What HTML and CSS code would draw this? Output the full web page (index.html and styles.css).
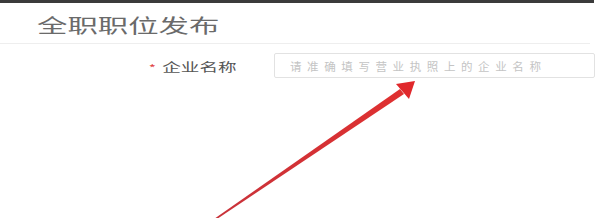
FILE: index.html
```html
<!DOCTYPE html>
<html lang="zh-CN">
<head>
    <meta charset="UTF-8">
    <title>全职职位发布</title>
    <link rel="stylesheet" href="styles.css">
</head>
<body>
    <div class="topbar"></div>
    <div class="page">
        <div class="page-title"><h1>全职职位发布</h1></div>
        <div class="form">
            <div class="form-row">
                <div class="form-label"><label><span class="required">*</span>企业名称</label></div>
                <input class="form-input" type="text" placeholder="请准确填写营业执照上的企业名称">
            </div>
        </div>
        <svg class="arrow" width="600" height="218" viewBox="0 0 600 218">
            <defs>
                <linearGradient id="shaft" x1="0" y1="1" x2="1" y2="0">
                    <stop offset="0" stop-color="#c8323a"/>
                    <stop offset="1" stop-color="#e03030"/>
                </linearGradient>
            </defs>
            <polygon points="214,219 217,219 404,94 400,89" fill="url(#shaft)"/>
            <polygon points="415,81 396,84 409,99" fill="#e0282c"/>
        </svg>
    </div>
</body>
</html>
```

FILE: styles.css
```css
body {
    margin: 0;
    background: #fff;
    font-family: "Noto Sans CJK SC", "Noto Sans", sans-serif;
    width: 600px;
    height: 218px;
    overflow: hidden;
}

.topbar {
    height: 3px;
    width: 594px;
    background: #3b3b3b;
}

.page {
    position: relative;
    height: 215px;
    overflow: hidden;
}

.page-title {
    width: 590px;
    padding: 8px 0 0 37px;
    box-sizing: border-box;
    height: 41px;
    border-bottom: 1px solid #eeeeee;
}

.page-title h1 {
    display: inline-block;
    margin: 0;
    font-size: 19px;
    font-weight: normal;
    color: #6a6a6a;
    line-height: 28px;
    transform: scaleX(1.6);
    transform-origin: left center;
    white-space: nowrap;
}

.form {
    padding-top: 9px;
}

.form-row {
    display: flex;
    align-items: center;
}

.form-label {
    width: 274px;
    padding-right: 37px;
    box-sizing: border-box;
    text-align: right;
    margin-top: -1px;
}

.form-label label {
    display: inline-block;
    font-size: 12px;
    color: #555;
    transform: scaleX(1.55);
    transform-origin: right center;
}

.required {
    color: #e04444;
    margin-right: 4px;
    font-size: 10px;
}

.form-input {
    width: 321px;
    height: 25px;
    box-sizing: border-box;
    border: 1px solid #e2e2e2;
    border-radius: 2px;
    padding: 0 15px;
    font-family: inherit;
    font-size: 11.5px;
    letter-spacing: 5.6px;
    outline: none;
}

.form-input::placeholder {
    color: #c4c4c4;
}

.arrow {
    position: absolute;
    left: 0;
    top: -3px;
    pointer-events: none;
}
```
